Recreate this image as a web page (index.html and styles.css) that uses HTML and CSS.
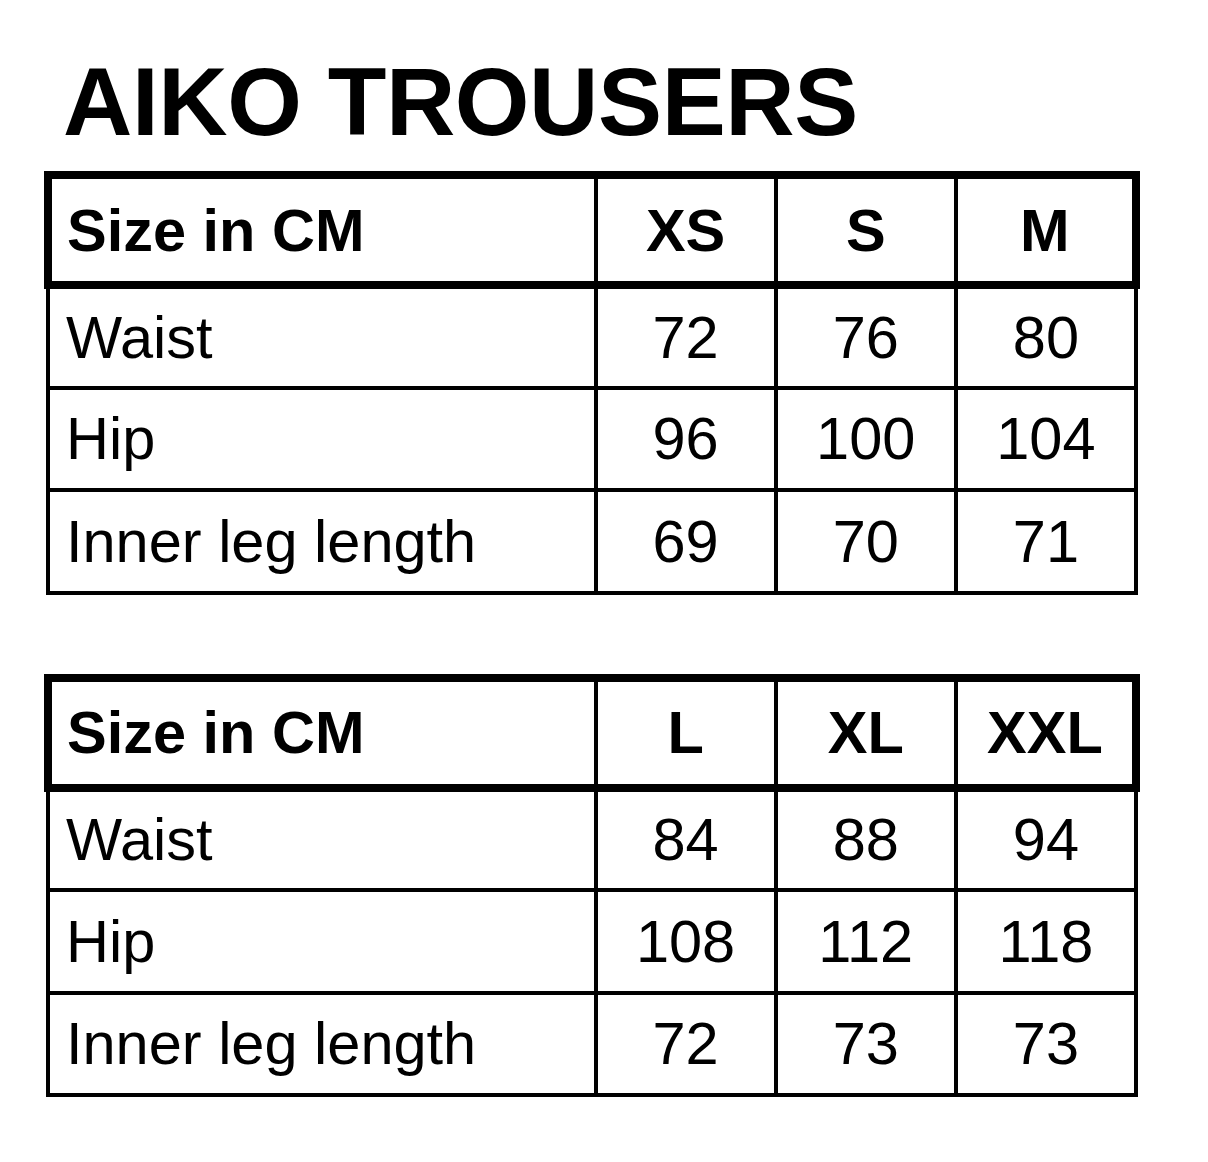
FILE: index.html
```html
<!DOCTYPE html>
<html>
<head>
<meta charset="utf-8">
<link rel="stylesheet" href="styles.css">
</head>
<body>
<div class="page">
  <h1 class="title">AIKO TROUSERS</h1>
  <table class="sizes">
    <colgroup><col class="c-label"><col class="c-val"><col class="c-val"><col class="c-val"></colgroup>
    <thead>
      <tr class="head"><th class="label">Size in CM</th><th>XS</th><th>S</th><th class="last">M</th></tr>
    </thead>
    <tbody>
      <tr><td class="label">Waist</td><td>72</td><td>76</td><td>80</td></tr>
      <tr><td class="label">Hip</td><td>96</td><td>100</td><td>104</td></tr>
      <tr><td class="label">Inner leg length</td><td>69</td><td>70</td><td>71</td></tr>
    </tbody>
  </table>
  <table class="sizes second">
    <colgroup><col class="c-label"><col class="c-val"><col class="c-val"><col class="c-val"></colgroup>
    <thead>
      <tr class="head"><th class="label">Size in CM</th><th>L</th><th>XL</th><th class="last">XXL</th></tr>
    </thead>
    <tbody>
      <tr><td class="label">Waist</td><td>84</td><td>88</td><td>94</td></tr>
      <tr><td class="label">Hip</td><td>108</td><td>112</td><td>118</td></tr>
      <tr><td class="label">Inner leg length</td><td>72</td><td>73</td><td>73</td></tr>
    </tbody>
  </table>
</div>
</body>
</html>
```

FILE: styles.css
```css
html, body {
  margin: 0;
  padding: 0;
  background: #fff;
}
body {
  font-family: "Liberation Sans", Arial, Helvetica, sans-serif;
  color: #000;
}
.page {
  padding-left: 44px;
  padding-top: 54px;
}
.title {
  margin: 0 0 0 19px;
  font-size: 96px;
  line-height: 96px;
  font-weight: bold;
  letter-spacing: -0.4px;
}
.sizes {
  border-collapse: collapse;
  table-layout: fixed;
  width: 1096px;
  margin-top: 21px;
}
.sizes.second {
  margin-top: 79px;
}
.c-label { width: 547px; }
.c-val { width: 180px; }
.sizes th, .sizes td {
  border: 4px solid #000;
  padding: 0;
  font-size: 59.5px;
  text-align: center;
  vertical-align: middle;
  white-space: nowrap;
}
.sizes .head { height: 110px; }
.sizes tbody tr { height: 102.5px; }
.sizes th {
  border-top-width: 8px;
  border-bottom-width: 8px;
  font-weight: bold;
}
.sizes th.label { border-left-width: 8px; }
.sizes th.last { border-right-width: 8px; }
.sizes tbody td {
  font-weight: normal;
}
.sizes .label {
  text-align: left;
  padding-left: 16px;
}
.sizes th.label {
  padding-left: 15px;
}
```
